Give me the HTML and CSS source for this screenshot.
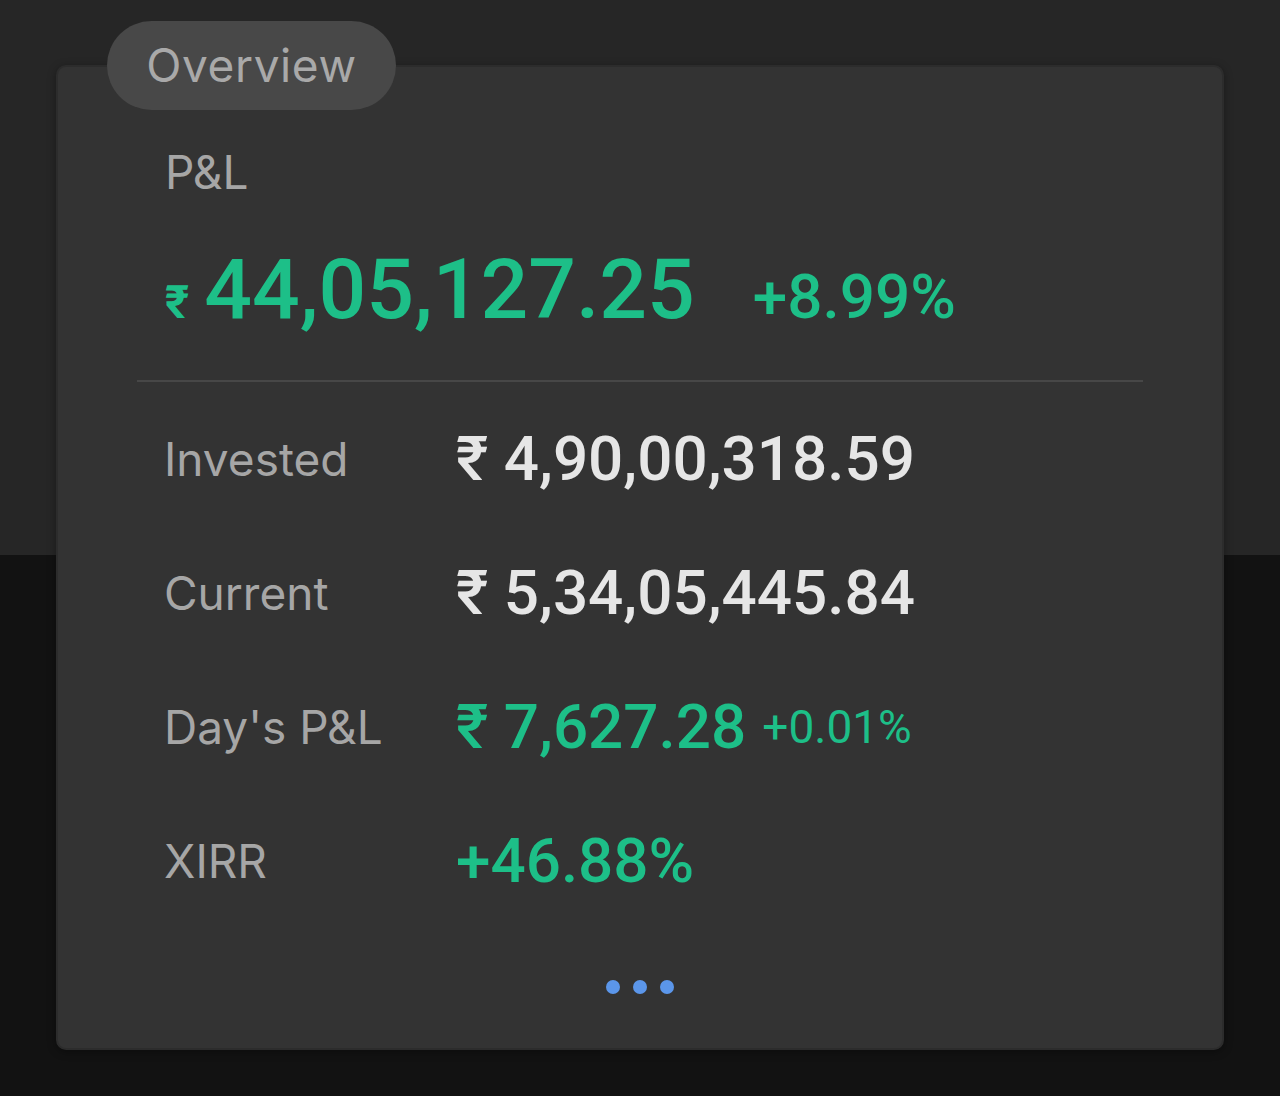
FILE: index.html
```html
<!DOCTYPE html>
<html lang="en">
<head>
<meta charset="UTF-8">
<meta name="viewport" content="width=device-width, initial-scale=1.0">
<title>Portfolio overview</title>
<link rel="stylesheet" href="styles.css">
</head>
<body>
<div class="page">
  <div class="card">
    <div class="tab">Overview</div>

    <div class="pnl-label">P&amp;L</div>
    <div class="pnl-total">
      <span class="rupee-small">₹</span>
      <span class="pnl-amount">44,05,127.25</span>
      <span class="pnl-pct">+8.99%</span>
    </div>

    <div class="divider"></div>

    <div class="row">
      <div class="label">Invested</div>
      <div class="value">₹ 4,90,00,318.59</div>
    </div>
    <div class="row">
      <div class="label">Current</div>
      <div class="value">₹ 5,34,05,445.84</div>
    </div>
    <div class="row">
      <div class="label">Day's P&amp;L</div>
      <div class="value green">₹ 7,627.28</div>
      <div class="change">+0.01%</div>
    </div>
    <div class="row">
      <div class="label">XIRR</div>
      <div class="value green">+46.88%</div>
    </div>

    <div class="dots">
      <span></span><span></span><span></span>
    </div>
  </div>
</div>
</body>
</html>
```

FILE: styles.css
```css
body {
  margin: 0;
  padding: 0;
  background: linear-gradient(#262626 0, #262626 555px, #121212 555px);
  min-height: 1096px;
  font-family: Inter, "Noto Sans", sans-serif;
}
.page {
  padding: 65px 56px 46px;
}
.card {
  position: relative;
  height: 985px;
  box-sizing: border-box;
  padding: 147px 79px 0;
  background-color: #333333;
  border: 2px solid #2c2c2c;
  border-radius: 10px;
  box-shadow: 0 2px 8px rgba(0, 0, 0, 0.35);
}
.tab {
  position: absolute;
  top: -46px;
  left: 49px;
  width: 289px;
  height: 89px;
  line-height: 89px;
  text-align: center;
  border-radius: 45px;
  background-color: #484848;
  color: #a9a9a9;
  font-size: 46px;
  letter-spacing: 0.6px;
}
.pnl-label {
  margin: -70px 0 0 28px;
  font-size: 46px;
  line-height: 56px;
  color: #a6a6a6;
}
.pnl-total {
  display: flex;
  align-items: baseline;
  height: 84px;
  margin: 48px 0 0 28px;
  font-family: Roboto, "Noto Sans", sans-serif;
  color: #1dbf88;
  line-height: 84px;
}
.rupee-small {
  font-size: 46px;
  font-weight: 700;
  margin-right: 15px;
}
.pnl-amount {
  font-size: 84px;
  font-weight: 500;
}
.pnl-pct {
  font-size: 62px;
  font-weight: 500;
  margin-left: 58px;
}
.divider {
  height: 2px;
  margin-top: 48px;
  background-color: #474747;
}
.row {
  display: flex;
  height: 134px;
  padding-left: 27px;
  line-height: 70px;
}
.row > div {
  height: 70px;
}
.divider + .row {
  margin-top: 42px;
}
.label {
  width: 292px;
  flex: none;
  font-size: 46px;
  color: #a6a6a6;
}
.value {
  font-family: Roboto, "Noto Sans", sans-serif;
  font-size: 62px;
  font-weight: 500;
  color: #e6e6e6;
}
.green {
  color: #1dbf88;
}
.change {
  margin-left: 16px;
  font-family: Roboto, "Noto Sans", sans-serif;
  font-size: 46px;
  color: #1dbf88;
}
.dots {
  display: flex;
  justify-content: center;
  gap: 13px;
  margin-top: 20px;
}
.dots span {
  width: 14px;
  height: 14px;
  border-radius: 50%;
  background-color: #5b96ea;
}
```
